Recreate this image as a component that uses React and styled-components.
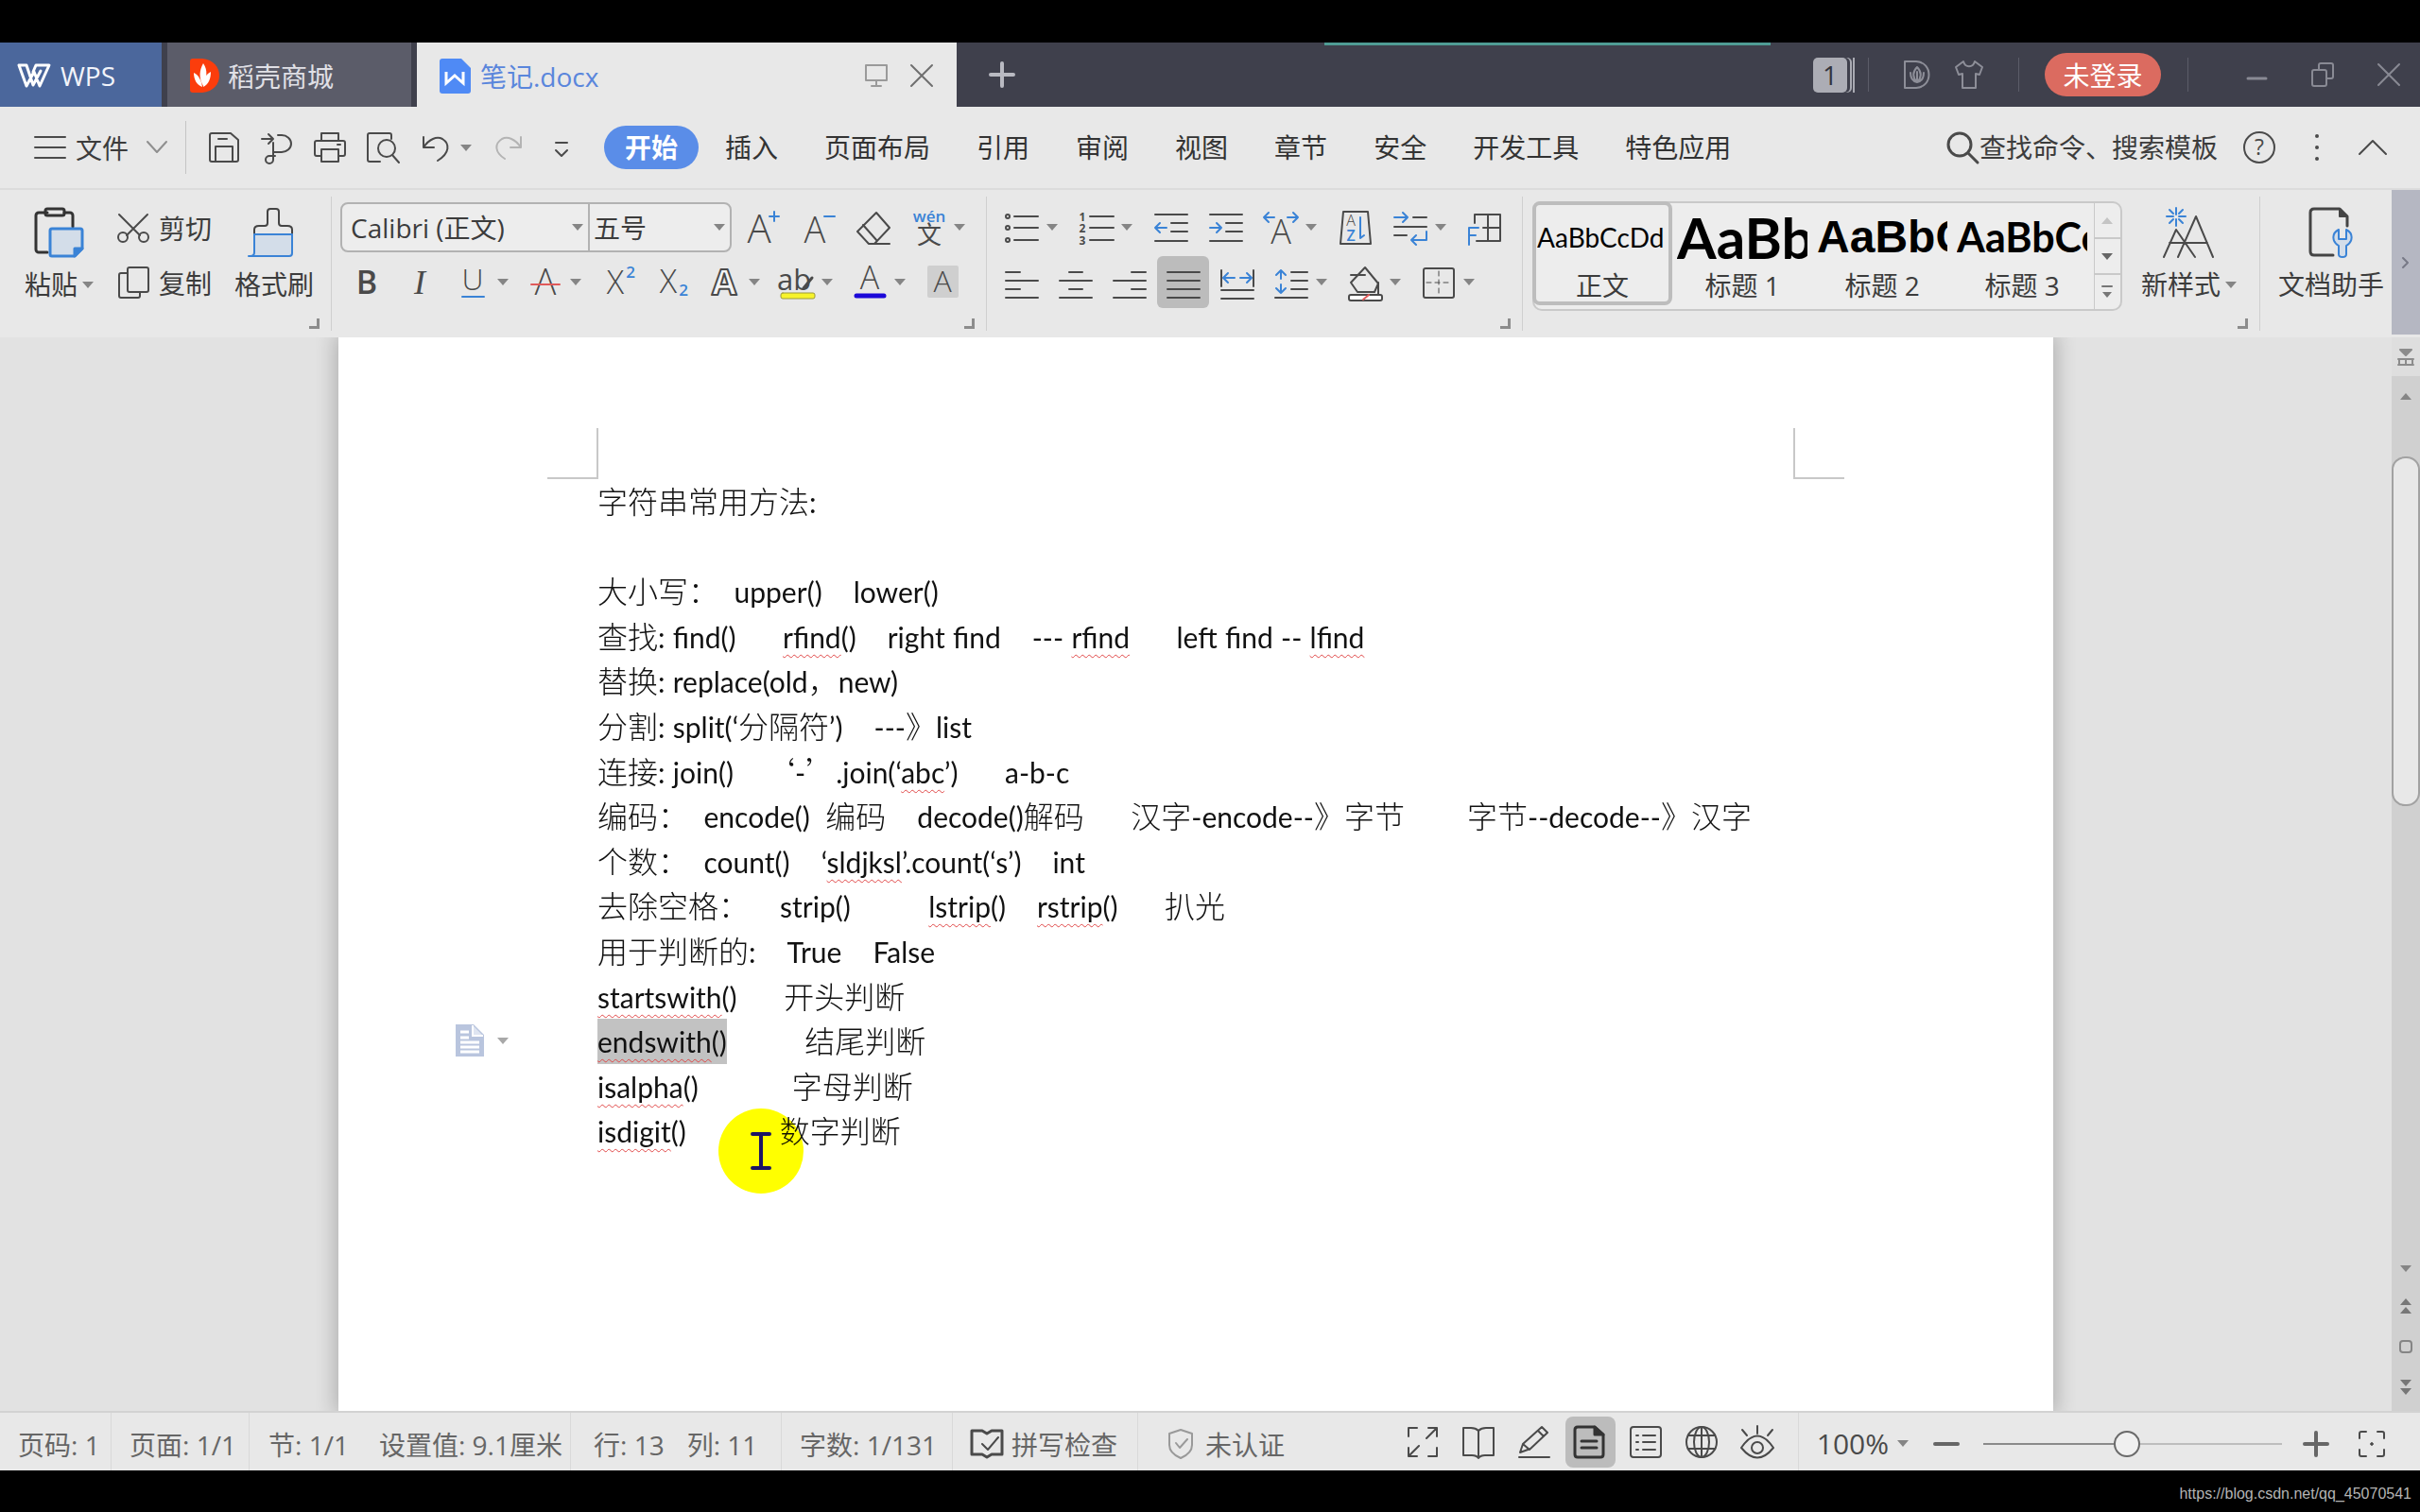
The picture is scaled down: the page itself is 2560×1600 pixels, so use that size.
import React from 'react';
import styled, { createGlobalStyle, css } from 'styled-components';

const UI_FONT = '"Open Sans", "Noto Sans CJK SC", sans-serif';
const DOC_FONT = 'Lato, "Noto Sans CJK SC", sans-serif';
const INK = '#4a4a4a';
const BLUE = '#3a83d6';

const GlobalStyle = createGlobalStyle`
    * { box-sizing: border-box; }
    body {
        margin: 0;
        background: #000;
        color: #3c3c3c;
        font-family: ${UI_FONT};
        font-size: 28px;
    }
    button, input, select {
        margin: 0;
        padding: 0;
        border: 0;
        background: none;
        color: inherit;
        font: inherit;
    }
    svg { display: block; flex: none; overflow: visible; }
`;

const Screen = styled.div`
    display: flex;
    flex-direction: column;
    min-height: 100vh;
    padding-top: 45px;
`;

// ---------- title bar ----------

const TitleBar = styled.header`
    display: flex;
    height: 68px;
    background: #3f404c;
    color: #e6e6ec;
`;

const WindowTab = styled.button`
    display: flex;
    align-items: center;
    gap: ${props => props.$gap || 9}px;
    width: ${props => props.$width}px;
    padding: 2px 24px 0;
    margin-right: ${props => props.$last ? 0 : 6}px;
    background: ${props => props.$bg};
    color: ${props => props.$color || '#e0e0e6'};
`;

const HomeTab = styled(WindowTab)`
    padding: 2px 18px 0;
`;

const TabTitle = styled.span`
    flex: 1;
    text-align: left;
    white-space: nowrap;
`;

const TabTools = styled.span`
    display: flex;
    gap: 22px;
`;

const NewTab = styled.button`
    width: 96px;
    display: flex;
    align-items: center;
    justify-content: center;
`;

const ProgressMark = styled.div`
    width: 472px;
    height: 3px;
    margin-left: 293px;
    background: #4f9c94;
`;

const TitleTools = styled.div`
    display: flex;
    align-items: center;
    margin-left: auto;
    padding-right: 20px;
`;

const CountBadge = styled.button`
    width: 44px;
    height: 37px;
    border-right: 2px solid #a9aab2;
    padding-right: 2px;
    span {
        display: block;
        height: 37px;
        border-radius: 5px;
        margin-right: 4px;
        background: #acadb5;
        color: #33343d;
        line-height: 37px;
        box-shadow: 3px 0 0 #3f404c, 5px 0 0 #a9aab2;
    }
`;

const TitleRule = styled.span`
    width: 1px;
    height: 36px;
    margin: 0 ${props => props.$right}px 0 ${props => props.$left}px;
    background: #5b5c68;
`;

const IconGap = styled.div`
    display: flex;
    align-items: center;
    gap: ${props => props.$gap}px;
`;

const BareButton = styled.button`
    display: flex;
    align-items: center;
    justify-content: center;
`;

const LoginButton = styled.button`
    width: 123px;
    height: 46px;
    border-radius: 23px;
    background: #db6b60;
    color: #fff;
`;

// ---------- menu ----------

const MenuBar = styled.nav`
    display: flex;
    align-items: center;
    height: 88px;
    padding: 0 34px 0 36px;
    background: #e8e8e8;
    border-bottom: 2px solid #dcdcdc;
`;

const FileMenu = styled.button`
    display: flex;
    align-items: center;
    gap: 10px;
    span { margin-right: 9px; }
`;

const MenuRule = styled.span`
    width: 1px;
    height: 56px;
    margin: 0 12px 0 19px;
    background: #c4c4c4;
`;

const QuickTools = styled.div`
    display: flex;
    gap: 1px;
    margin-right: 18px;
`;

const MenuTabs = styled.div`
    display: flex;
    gap: 1px;
`;

const MenuTab = styled.button`
    height: 46px;
    padding: 0 24px;
    border-radius: 23px;
    color: #333;
    line-height: 46px;
    white-space: nowrap;
    ${props => props.$active && css`
        padding: 0 22px;
        margin-right: 3px;
        background: #5a8de8;
        color: #fff;
        font-weight: 700;
    `}
`;

const SearchBox = styled.label`
    display: flex;
    align-items: center;
    margin-left: auto;
    input {
        width: 256px;
        height: 46px;
        outline: 0;
    }
    input::placeholder {
        color: #3c3c3c;
        opacity: 1;
    }
`;

const MenuTools = styled.div`
    display: flex;
    align-items: center;
    gap: 40px;
    margin-left: 22px;
`;

// ---------- ribbon ----------

const Ribbon = styled.section`
    display: flex;
    height: 156px;
    background: #e8e8e8;
`;

const Group = styled.div`
    display: flex;
    flex-direction: column;
    justify-content: space-between;
    flex: ${props => props.$grow ? '1' : 'none'};
    margin: 7px 0;
    padding: 5px 0 2px;
    border-right: ${props => props.$last ? '0' : '1px solid #cfcfcf'};
`;

const GroupBody = styled.div`
    display: flex;
    gap: ${props => props.$gap || 0}px;
    padding: 0 ${props => props.$right}px 0 ${props => props.$left || 9}px;
`;

const ToolRows = styled.div`
    display: flex;
    flex-direction: column;
    gap: 3px;
`;

const ToolRow = styled.div`
    display: flex;
    align-items: center;
    height: 55px;
    gap: ${props => props.$gap}px;
`;

const ToolButton = styled.button`
    display: flex;
    align-items: center;
    gap: 6px;
    width: ${props => props.$menu ? 76 : 55}px;
    height: 55px;
    padding-left: 8px;
    border-radius: 6px;
    background: ${props => props.$active ? '#bcbcbc' : 'none'};
`;

const BigButton = styled.button`
    display: flex;
    flex-direction: column;
    align-items: center;
    height: 116px;
    padding-top: 6px;
`;

const BigLabel = styled.span`
    display: flex;
    align-items: center;
    gap: 5px;
    line-height: 56px;
    white-space: nowrap;
`;

const SmallButton = styled.button`
    display: flex;
    align-items: center;
    gap: 9px;
    height: 55px;
`;

const Launcher = styled.button`
    align-self: flex-end;
    width: 11px;
    height: 11px;
    margin-right: 12px;
    border: solid #8c8c8c;
    border-width: 0 3px 3px 0;
`;

const FontBox = styled.div`
    display: flex;
    width: 414px;
    height: 53px;
    border: 2px solid #b2b2b2;
    border-radius: 8px;
    background: #ededed;
`;

const Picker = styled.label`
    display: flex;
    align-items: center;
    flex: ${props => props.$width ? 'none' : '1'};
    width: ${props => props.$width ? props.$width + 'px' : 'auto'};
    padding: 0 5px 0 ${props => props.$width ? 9 : 4}px;
    & + & { border-left: 2px solid #b2b2b2; }
    select {
        flex: 1;
        min-width: 0;
        appearance: none;
        outline: 0;
    }
`;

const Gallery = styled.div`
    display: flex;
    flex: 1;
    height: 116px;
    border: 2px solid #c9c9c9;
    border-radius: 10px;
    background: #ededed;
`;

const StyleCard = styled.button`
    display: flex;
    flex-direction: column;
    width: 148px;
    height: ${props => props.$active ? 110 : 112}px;
    padding: ${props => props.$active ? '0 1px' : '2px 5px'};
    border-radius: 8px;
    ${props => props.$active && css`
        margin: -2px 0 0 -2px;
        border: 4px solid #bdbdbd;
    `}
`;

const Preview = styled.span`
    width: 100%;
    height: 68px;
    overflow: hidden;
    color: #000;
    font-family: ${props => props.$face || DOC_FONT};
    font-size: ${props => props.$size}px;
    font-weight: ${props => props.$bold ? 700 : 400};
    line-height: 68px;
    text-align: left;
    white-space: nowrap;
`;

const StyleName = styled.span`
    width: 100%;
    line-height: 34px;
`;

const GalleryScroll = styled.div`
    display: flex;
    flex-direction: column;
    width: 28px;
    margin-left: auto;
    border-left: 1px solid #c9c9c9;
    button {
        display: flex;
        flex: 1;
        align-items: center;
        justify-content: center;
    }
    button + button { border-top: 2px solid #c9c9c9; }
`;

const RibbonMore = styled.button`
    display: flex;
    align-items: center;
    justify-content: center;
    flex: none;
    width: 30px;
    height: 153px;
    background: #b5b7c2;
`;

// ---------- document ----------

const Workspace = styled.main`
    display: flex;
    flex: 1;
    background: #e2e2e2;
`;

const Desk = styled.div`
    display: flex;
    flex: 1;
    justify-content: center;
`;

const Page = styled.article`
    width: 1814px;
    padding-top: 96px;
    background: #fff;
    box-shadow: 0 0 20px 4px rgba(0, 0, 0, 0.22);
    clip-path: inset(0 -24px);
`;

const Margins = styled.div`
    display: flex;
    justify-content: space-between;
    padding: 0 221px;
    span {
        width: 54px;
        height: 54px;
        border: solid #c8c8c8;
        border-width: 0 2px 2px 0;
    }
    span + span { border-width: 0 0 2px 2px; }
`;

const Lines = styled.div`
    display: grid;
    grid-auto-rows: minmax(0, 1fr);
    height: 714px;
    padding: 0 274px;
`;

const Line = styled.p`
    position: relative;
    margin: 0;
    color: #111;
    font-family: ${DOC_FONT};
    font-size: 32px;
    line-height: 48px;
    white-space: pre;
`;

const Latin = styled.span`
    font-size: 30px;
    line-height: 0;
`;

const Space = styled.span`
    font-family: "Liberation Serif", serif;
    font-size: 33px;
    line-height: 0;
`;

const Wide = styled.span`
    font-family: "Noto Sans CJK SC", sans-serif;
    font-weight: 300;
    line-height: 0;
`;

const Misspelt = styled(Latin)`
    text-decoration: underline wavy #e04848 1px;
    text-decoration-skip-ink: none;
    text-underline-offset: 6px;
`;

const Selected = styled.span`
    display: inline-block;
    height: 48px;
    background: #c2c2c2;
    vertical-align: top;
`;

const PasteOptions = styled.button`
    position: absolute;
    top: 6px;
    left: -150px;
    display: flex;
    align-items: center;
    gap: 14px;
`;

const Pointer = styled.span`
    position: absolute;
    top: 0;
    left: 128px;
    display: flex;
    align-items: center;
    justify-content: center;
    width: 90px;
    height: 90px;
    border-radius: 45px;
    background: #ffff00;
    mix-blend-mode: multiply;
`;

const ScrollBar = styled.div`
    display: flex;
    flex-direction: column;
    align-items: center;
    width: 30px;
    padding-bottom: 16px;
    background: #d0d0d0;
`;

const RulerButton = styled(BareButton)`
    width: 30px;
    height: 41px;
    margin-bottom: 18px;
    background: #dedede;
`;

const ScrollThumb = styled.div`
    width: 30px;
    height: 370px;
    margin: 60px 0 auto;
    border: 2px solid #a2a2a2;
    border-radius: 14px;
    background: #e8e8e8;
`;

const ScrollJumps = styled.div`
    display: flex;
    flex-direction: column;
    align-items: center;
    gap: 27px;
`;

// ---------- status bar ----------

const StatusBar = styled.footer`
    display: flex;
    align-items: center;
    height: 63px;
    border-top: 2px solid #d2d2d2;
    background: #e8e8e8;
    color: #666;
    white-space: nowrap;
`;

const StatusItem = styled.div`
    display: flex;
    align-items: center;
    gap: ${props => props.$gap || 0}px;
    height: 61px;
    padding: 4px 0 0 ${props => props.$left}px;
    width: ${props => props.$width}px;
    border-right: ${props => props.$open ? '0' : '1px solid #d9d9d9'};
`;

const ViewTools = styled.div`
    display: flex;
    align-items: center;
    gap: 6px;
    height: 61px;
    margin-left: auto;
    padding-right: 16px;
    border-right: 1px solid #d9d9d9;
`;

const ViewButton = styled(BareButton)`
    width: 53px;
    height: 54px;
    border-radius: 8px;
    background: ${props => props.$active ? '#bcbcbc' : 'none'};
`;

const ZoomTools = styled.div`
    display: flex;
    align-items: center;
    padding: 4px 36px 0 19px;
    color: ${INK};
`;

const ZoomValue = styled.button`
    display: flex;
    align-items: center;
    gap: 9px;
    margin-right: 26px;
    font-size: 30px;
`;

const ZoomSlider = styled.input`
    appearance: none;
    width: 316px;
    height: 28px;
    margin: 0 22px 0 25px;
    background: linear-gradient(to right, #8a8a8a 48%, #bdbdbd 48%) center / 100% 2px no-repeat;
    &::-webkit-slider-thumb {
        appearance: none;
        width: 28px;
        height: 28px;
        border: 2px solid #6a6a6a;
        border-radius: 14px;
        background: #f0f0f0;
    }
`;

const FitButton = styled(BareButton)`
    margin-left: 30px;
`;

const Footer = styled.div`
    height: 44px;
    padding: 0 9px;
    background: #000;
    color: #b4b4b4;
    font-family: "Liberation Sans", sans-serif;
    font-size: 16px;
    line-height: 50px;
    text-align: right;
`;

// ---------- icons ----------

const Icon = ({ w = 40, h = w, box = `0 0 ${w} ${h}`, color = INK, width = 2, children }) => (
    <svg width={w} height={h} viewBox={box} fill="none" stroke={color} strokeWidth={width}
        strokeLinecap="round" strokeLinejoin="round" aria-hidden="true">
        {children}
    </svg>
);

const Caret = ({ color = '#858585', up }) => (
    <svg width="12" height="7" viewBox="0 0 12 7" fill={color} aria-hidden="true">
        <path d={up ? 'M6 0l6 7H0z' : 'M0 0h12L6 7z'} />
    </svg>
);

const Letter = ({ x = 20, y = 36, size = 42, fill = INK, weight = 300, anchor = 'middle', children, ...rest }) => (
    <text x={x} y={y} fontSize={size} fontWeight={weight} fill={fill} stroke="none" textAnchor={anchor}
        fontFamily={UI_FONT} {...rest}>{children}</text>
);

const Tool = ({ label, menu, active, children }) => (
    <ToolButton $menu={menu} $active={active} aria-label={label}>
        <Icon>{children}</Icon>
        {menu && <Caret />}
    </ToolButton>
);

const LINES_Y = [9, 18, 27, 36];

const quickTools = [
    ['保存', <g key="a"><path d="M5 7a2 2 0 0 1 2-2h20l8 7v21a2 2 0 0 1-2 2H7a2 2 0 0 1-2-2z" /><path d="M11 35V19h18v16M14 11h9" /></g>],
    ['输出', <g key="a"><path d="M4 11h12M11 6l5 5-5 5M21 7h4a10 9 0 0 1 0 18h-8M16 15v18a4 4 0 1 1-4-4h6" /></g>],
    ['打印', <g key="a"><path d="M11 13V5h18v8M11 29H6a2 2 0 0 1-2-2V15a2 2 0 0 1 2-2h28a2 2 0 0 1 2 2v12a2 2 0 0 1-2 2h-5" /><path d="M11 22h18v13H11zM28 17h3" /></g>],
    ['打印预览', <g key="a"><path d="M17 35H6a2 2 0 0 1-2-2V7a2 2 0 0 1 2-2h21a2 2 0 0 1 2 2v4" /><circle cx="24" cy="21" r="9" /><path d="M30 28l7 8" /></g>],
    ['撤销', <g key="a"><path d="M7 9v11h11M7 20C13 11 21 8 27 11c8 5 8 15-5 23" /></g>, true],
    ['恢复', <g key="a" stroke="#b4b4b4"><path d="M33 9v11H22M33 20C27 11 19 8 13 11c-8 5-8 14 3 21" /></g>],
    ['自定义', <g key="a"><path d="M14 15h12M14 23l6 6 6-6" /></g>],
];

const fontTools = [
    ['加粗', <Letter key="a" size={34} y={32} weight={600}>B</Letter>],
    ['倾斜', <Letter key="a" size={36} y={32} fontFamily="Liberation Serif, serif" fontStyle="italic">I</Letter>],
    ['下划线', <g key="a"><Letter size={32} y={28}>U</Letter><path d="M9 35h23" stroke={BLUE} /></g>, true],
    ['删除线', <g key="a"><Letter size={38} y={33}>A</Letter><path d="M5 22h30" stroke="#e05a5a" /></g>, true],
    ['上标', <g key="a"><Letter x={17} y={32} size={34}>X</Letter><Letter x={33} y={15} size={17} fill={BLUE} weight={600}>2</Letter></g>],
    ['下标', <g key="a"><Letter x={17} y={31} size={34}>X</Letter><Letter x={33} y={34} size={17} fill={BLUE} weight={600}>2</Letter></g>],
    ['文字效果', <text key="a" x="20" y="33" fontSize="38" fontWeight="700" fontFamily={UI_FONT} textAnchor="middle" fill="#f4f4f4" stroke={INK} strokeWidth="2">A</text>, true],
    ['突出显示', <g key="a"><Letter x={17} y={28} size={31} weight={400}>ab</Letter><path d="M27 26l9-11" strokeWidth="3" /><rect x="3" y="31" width="36" height="6" rx="2" fill="#f7f32a" stroke="#9b9a3a" strokeWidth="1" /></g>, true],
    ['字体颜色', <g key="a"><Letter size={34} y={27}>A</Letter><path d="M6 34h29" stroke="#1b08d8" strokeWidth="5" /></g>, true],
    ['字符底纹', <g key="a"><rect x="4" y="2" width="33" height="34" rx="2" fill="#cfcfcf" stroke="none" /><Letter size={32} y={30}>A</Letter></g>],
];

const paragraphTop = [
    ['项目符号', <g key="a"><path d="M12 8h25M12 20h25M12 33h25" /><circle cx="5" cy="8" r="2" /><circle cx="5" cy="20" r="2" /><circle cx="5" cy="33" r="2" /></g>, true],
    ['编号', <g key="a"><path d="M13 8h25M13 20h25M13 33h25" /><Letter x={5} y={13} size={12} weight={700}>1</Letter><Letter x={5} y={25} size={12} weight={700}>2</Letter><Letter x={5} y={38} size={12} weight={700}>3</Letter></g>, true],
    ['减少缩进', <g key="a"><path d="M3 6h34M20 15h17M20 24h17M3 34h34" /><path d="M3 20h12M8 15l-5 5 5 5" stroke={BLUE} /></g>],
    ['增加缩进', <g key="a"><path d="M3 6h34M20 15h17M20 24h17M3 34h34" /><path d="M3 20h12M10 15l5 5-5 5" stroke={BLUE} /></g>],
    ['字符缩放', <g key="a"><Letter y={37} size={36}>A</Letter><path d="M2 9h11M7 4L2 9l5 5M27 9h11M33 4l5 5-5 5" stroke={BLUE} /></g>, true],
    ['排序', <g key="a"><path d="M7 3h26l3 34H4z" /><Letter x={15} y={18} size={16}>A</Letter><Letter x={15} y={34} size={16} fill={BLUE} weight={600}>Z</Letter><path d="M25 9v22l4-3" stroke={BLUE} /></g>],
    ['换行', <g key="a"><path d="M23 9h14M3 19h34M3 28h13" /><path d="M3 9h14M12 4l5 5-5 5M37 24v9H21M26 28l-5 5 5 5" stroke={BLUE} /></g>, true],
    ['制表位', <g key="a"><path d="M9 15V6h27v28H11M23 6v28M18 20h18" /><path d="M3 38V20h10M3 28h7" stroke={BLUE} /></g>],
];

const paragraphBottom = [
    ['左对齐', <path key="a" d="M3 9h15M3 18h34M3 27h15M3 36h34" />],
    ['居中', <path key="a" d="M13 9h14M3 18h34M13 27h14M3 36h34" />],
    ['右对齐', <path key="a" d="M22 9h15M3 18h34M22 27h15M3 36h34" />],
    ['两端对齐', <path key="a" d={LINES_Y.map(y => `M3 ${y}h34`).join('')} />, false, true],
    ['分散对齐', <g key="a"><path d="M3 7v17M37 7v17M3 28h34M3 37h34" /><path d="M6 15h11M10 10l-5 5 5 5M23 15h11M30 10l5 5-5 5" stroke={BLUE} /></g>],
    ['行距', <g key="a"><path d="M20 9h17M20 18h17M20 27h17M3 36h34" /><path d="M9 7v9M4 12l5-5 5 5M9 22v9M4 26l5 5 5-5" stroke={BLUE} /></g>, true],
    ['底纹', <g key="a"><path d="M20 4L5 20l7 10h18l4-9z" /><path d="M5 12h15M34 20v12" /><rect x="3" y="33" width="35" height="6" rx="2" fill="#fff" /><path d="M18 38l6-5" stroke="#e05a5a" /></g>, true],
    ['边框', <g key="a"><rect x="4" y="5" width="32" height="31" rx="2" /><path d="M20 8v26M7 20h27" strokeDasharray="5 4" strokeWidth="1" /></g>, true],
];

const renderTools = list => list.map(([label, art, menu, active]) => (
    <Tool key={label} label={label} menu={menu} active={active}>{art}</Tool>
));

const menuTabs = ['开始', '插入', '页面布局', '引用', '审阅', '视图', '章节', '安全', '开发工具', '特色应用'];

const styleCards = [
    { name: '正文', text: 'AaBbCcDd', size: 28 },
    { name: '标题 1', text: 'AaBbCc', size: 60, bold: true },
    { name: '标题 2', text: 'AaBbCc', size: 48, bold: true, face: '"Liberation Sans", sans-serif' },
    { name: '标题 3', text: 'AaBbCcD', size: 43, bold: true },
];

// A string is plain text; {bad} is flagged by the spell checker, {wide} keeps full-width quotes.
const docLines = [
    ['字符串常用方法:'],
    [],
    ['大小写：  upper()    lower()'],
    ['查找: find()      ', { bad: 'rfind' }, '()    right find    --- ', { bad: 'rfind' }, '      left find -- ', { bad: 'lfind' }],
    ['替换: replace(old，new)'],
    ['分割: split(‘分隔符’)    ---》list'],
    ['连接: join()    ', { wide: '‘' }, '-', { wide: '’' }, '.join(‘', { bad: 'abc' }, '’)      a-b-c'],
    ['编码：  encode()  编码    decode()解码      汉字-encode--》字节        字节--decode--》汉字'],
    ['个数：  count()    ‘', { bad: 'sldjksl' }, '’.count(‘s’)    int'],
    ['去除空格：    strip()          ', { bad: 'lstrip' }, '()    ', { bad: 'rstrip' }, '()      扒光'],
    ['用于判断的:    True    False'],
    [{ bad: 'startswith' }, '()      开头判断'],
    [{ bad: 'endswith', selected: true }, '          结尾判断'],
    [{ bad: 'isalpha' }, '()            字母判断'],
    [{ bad: 'isdigit' }, '()            数字判断'],
];

const TextRun = ({ text }) => text.split(/( +|[\u3000-\u9fff\uff00-\uffef]+)/).filter(Boolean).map((part, i) => {
    if (part[0] === ' ') return <Space key={i}>{part}</Space>;
    if (/[\u3000-\uffef]/.test(part)) return <Wide key={i}>{part}</Wide>;
    return <Latin key={i}>{part}</Latin>;
});

const DocRun = ({ run }) => {
    if (typeof run === 'string') return <TextRun text={run} />;
    if (run.wide) return <Wide>{run.wide}</Wide>;
    if (run.selected) return <Selected><Misspelt>{run.bad}</Misspelt><Latin>()</Latin></Selected>;
    return <Misspelt>{run.bad}</Misspelt>;
};

const SheetIcon = () => (
    <svg width="30" height="34" viewBox="0 0 30 34" aria-hidden="true">
        <path d="M0 0h19l11 11v23H0z" fill="#b9c5de" />
        <path d="M5 8h9M5 14h9M5 19h20M5 24h20M5 29h20" stroke="#fff" strokeWidth="3" />
        <path d="M18 1v11h11" fill="#dfe5f1" stroke="#fff" strokeWidth="2" />
    </svg>
);

const TitleSection = () => (
    <TitleBar>
        <HomeTab $width={171} $bg="#4b679c" $color="#f2f4fa" $gap={10}>
            <Icon w={36} h={26} color="#fff" width={3}>
                <path d="M2 2h8l7 21 8-15M2 2l8 22 8-15 6 15L34 2H20l-3 7" />
            </Icon>
            <TabTitle>WPS</TabTitle>
        </HomeTab>
        <WindowTab $width={258} $bg="#5b5c69">
            <svg width="31" height="36" viewBox="0 0 31 36" aria-hidden="true">
                <path d="M3 0h10c24 2 24 34 0 36H3a3 3 0 0 1-3-3V3a3 3 0 0 1 3-3z" fill="#fb3d0c" />
                <path d="M14 5c5 7 4 15 0 24-5-9-4-17 0-24zM4 15c5 2 8 8 9 15-6-2-9-8-9-15zM22 14c0 7-2 13-8 16 0-7 2-13 8-16z" fill="#fff" />
            </svg>
            <TabTitle>稻壳商城</TabTitle>
        </WindowTab>
        <WindowTab $width={571} $bg="#e8e8e8" $color="#5a86dc" $gap={10} $last>
            <svg width="33" height="37" viewBox="0 0 33 37" aria-hidden="true">
                <path d="M3 0h20l10 10v24a3 3 0 0 1-3 3H3a3 3 0 0 1-3-3V3a3 3 0 0 1 3-3z" fill="#4f8af5" />
                <path d="M7 14v12l9-8 9 8V14" fill="none" stroke="#fff" strokeWidth="3" />
            </svg>
            <TabTitle>笔记.docx</TabTitle>
            <TabTools>
                <Icon w={26} h={26} color="#9a9a9a"><path d="M2 2h22v16H2zM13 18v6M8 24h10" /></Icon>
                <Icon w={26} h={26} color="#6f6f6f"><path d="M2 2l22 22M24 2L2 24" /></Icon>
            </TabTools>
        </WindowTab>
        <NewTab aria-label="新建">
            <Icon w={30} color="#b9bac2" width={4}><path d="M15 3v24M3 15h24" /></Icon>
        </NewTab>
        <ProgressMark />
        <TitleTools>
            <CountBadge><span>1</span></CountBadge>
            <TitleRule $left={14} $right={36} />
            <IconGap $gap={24}>
                <Icon w={30} h={32} color="#8d8e98">
                    <path d="M2 2h12c18 1 18 27 0 28H2zM15 8c5 5 5 11 0 16-5-5-5-11 0-16zM8 14c0 6 2 9 7 10 5-1 7-4 7-10M15 13v11" />
                </Icon>
                <Icon w={32} h={32} color="#8d8e98">
                    <path d="M10 2c2 7 10 7 12 0l8 6-3 8-4-1v15H9V15l-4 1-3-8z" />
                </Icon>
            </IconGap>
            <TitleRule $left={36} $right={27} />
            <LoginButton>未登录</LoginButton>
            <TitleRule $left={28} $right={61} />
            <IconGap $gap={44}>
                <BareButton aria-label="最小化"><Icon w={24} h={26} color="#898a94" width={3}><path d="M2 17h19" /></Icon></BareButton>
                <BareButton aria-label="还原"><Icon w={26} h={28} color="#898a94"><path d="M9 8V4q0-2 2-2h11q2 0 2 2v12q0 2-2 2h-4M2 11q0-2 2-2h11q2 0 2 2v13q0 2-2 2H4q-2 0-2-2z" /></Icon></BareButton>
                <BareButton aria-label="关闭"><Icon w={26} h={26} color="#898a94"><path d="M2 2l22 22M24 2L2 24" /></Icon></BareButton>
            </IconGap>
        </TitleTools>
    </TitleBar>
);

const MenuSection = () => (
    <MenuBar>
        <FileMenu>
            <Icon w={34} h={26}><path d="M1 2h32M1 13h32M1 24h32" /></Icon>
            <span>文件</span>
            <Icon w={22} h={14} color="#8f8f8f"><path d="M1 1l10 11L21 1" /></Icon>
        </FileMenu>
        <MenuRule />
        <QuickTools>{renderTools(quickTools)}</QuickTools>
        <MenuTabs>
            {menuTabs.map((tab, i) => <MenuTab key={tab} $active={i === 0}>{tab}</MenuTab>)}
        </MenuTabs>
        <SearchBox>
            <Icon w={36} h={36} width={3}><circle cx="15" cy="15" r="12" /><path d="M24 24l10 10" /></Icon>
            <input type="text" aria-label="搜索" placeholder="查找命令、搜索模板" />
        </SearchBox>
        <MenuTools>
            <BareButton aria-label="帮助"><Icon w={36}><circle cx="18" cy="18" r="16" /><Letter x={18} y={26} size={23} weight={400}>?</Letter></Icon></BareButton>
            <BareButton aria-label="更多"><Icon w={6} h={30} width={4}><path d="M3 3v0M3 15v0M3 27v0" /></Icon></BareButton>
            <BareButton aria-label="收起"><Icon w={32} h={18}><path d="M2 16L16 2l14 14" /></Icon></BareButton>
        </MenuTools>
    </MenuBar>
);

const RibbonSection = () => (
    <Ribbon>
        <Group>
            <GroupBody $left={26} $right={18} $gap={24}>
                <BigButton>
                    <Icon w={54} h={54} color="#333" width={3}>
                        <path d="M14 6H5a3 3 0 0 0-3 3v36a3 3 0 0 0 3 3h9M32 6h6a3 3 0 0 1 3 3v12" />
                        <rect x="12" y="2" width="20" height="7" rx="2" />
                        <path d="M19 23h30q2 0 2 2v19l-8 8H19q-2 0-2-2V25q0-2 2-2z" fill="#d3dde9" stroke={BLUE} />
                        <path d="M51 44h-8v8z" fill={BLUE} stroke={BLUE} />
                    </Icon>
                    <BigLabel>粘贴<Caret /></BigLabel>
                </BigButton>
                <ToolRows>
                    <SmallButton>
                        <Icon w={36} h={36}><path d="M3 4l22 22M33 4L11 26" /><circle cx="7" cy="28" r="5" /><circle cx="29" cy="28" r="5" /></Icon>
                        剪切
                    </SmallButton>
                    <SmallButton>
                        <Icon w={36} h={36}><rect x="12" y="2" width="22" height="26" rx="2" /><path d="M12 8H5q-2 0-2 2v22q0 2 2 2h18q2 0 2-2v-4" /></Icon>
                        复制
                    </SmallButton>
                </ToolRows>
                <BigButton>
                    <Icon w={54} h={54} color="#444">
                        <path d="M6 28v-4q0-4 5-4h6q3 0 3-3V5q0-3 3-3h6q3 0 3 3v12q0 3 3 3h6q5 0 5 4v4" />
                        <path d="M6 29h40v20q0 3-3 3H0h2q4 0 4-4z" fill="#d3dde9" stroke={BLUE} />
                    </Icon>
                    <BigLabel>格式刷</BigLabel>
                </BigButton>
            </GroupBody>
            <Launcher aria-label="剪贴板" />
        </Group>
        <Group>
            <GroupBody $right={12}>
                <ToolRows>
                    <ToolRow $gap={4}>
                        <FontBox>
                            <Picker $width={260}>
                                <select aria-label="字体" defaultValue="a"><option value="a">Calibri (正文)</option></select>
                                <Caret />
                            </Picker>
                            <Picker>
                                <select aria-label="字号" defaultValue="a"><option value="a">五号</option></select>
                                <Caret />
                            </Picker>
                        </FontBox>
                        <Tool label="增大字号"><Letter x={17} y={36} size={42}>A</Letter><path d="M28 8h10M33 3v10" stroke={BLUE} /></Tool>
                        <Tool label="减小字号"><Letter x={17} y={36} size={38}>A</Letter><path d="M27 8h11" stroke={BLUE} /></Tool>
                        <Tool label="清除格式"><path d="M23 4l14 16-16 17h-6L3 24zM9 17l15 17M15 37h22" /></Tool>
                        <Tool label="拼音指南" menu><Letter y={14} size={17} fill={BLUE} weight={600}>wén</Letter><Letter y={37} size={26} weight={400}>文</Letter></Tool>
                    </ToolRow>
                    <ToolRow $gap={1}>{renderTools(fontTools)}</ToolRow>
                </ToolRows>
            </GroupBody>
            <Launcher aria-label="字体设置" />
        </Group>
        <Group>
            <GroupBody $right={12}>
                <ToolRows>
                    <ToolRow $gap={3}>{renderTools(paragraphTop)}</ToolRow>
                    <ToolRow $gap={2}>{renderTools(paragraphBottom)}</ToolRow>
                </ToolRows>
            </GroupBody>
            <Launcher aria-label="段落设置" />
        </Group>
        <Group $grow>
            <GroupBody $left={10} $right={24} $gap={20}>
                <Gallery>
                    {styleCards.map((card, i) => (
                        <StyleCard key={card.name} $active={i === 0}>
                            <Preview $size={card.size} $bold={card.bold} $face={card.face}>{card.text}</Preview>
                            <StyleName>{card.name}</StyleName>
                        </StyleCard>
                    ))}
                    <GalleryScroll>
                        <button aria-label="上一行"><Caret up color="#c4c4c4" /></button>
                        <button aria-label="下一行"><Caret color="#666" /></button>
                        <button aria-label="更多样式"><Icon w={14} h={16} color="#777"><path d="M2 2h10" /><path d="M2 8h10l-5 6z" fill="#777" stroke="none" /></Icon></button>
                    </GalleryScroll>
                </Gallery>
                <BigButton>
                    <Icon w={56} h={54}>
                        <path d="M2 53L15 24l20 29M17 53L36 10l18 43M8 38h40" strokeWidth="2" />
                        <path d="M15 1v7M15 13v7M5 10h7M18 10h7M8 3l4 4M18 13l4 4M22 3l-4 4M8 17l4-4" stroke={BLUE} />
                    </Icon>
                    <BigLabel>新样式<Caret /></BigLabel>
                </BigButton>
            </GroupBody>
            <Launcher aria-label="样式设置" />
        </Group>
        <Group $last>
            <GroupBody $left={19} $right={8}>
                <BigButton>
                    <Icon w={48} h={54} color="#444">
                        <path d="M26 51H6q-4 0-4-4V6q0-4 4-4h27l8 8v10" strokeWidth="3" />
                        <path d="M33 2v8h8z" fill="#444" />
                        <path d="M32 24c-8 4-7 13 0 17v9q0 3 4 3t4-3v-9c7-4 8-13 0-17v10h-8z" fill="#d3dde9" stroke={BLUE} />
                    </Icon>
                    <BigLabel>文档助手</BigLabel>
                </BigButton>
            </GroupBody>
        </Group>
        <RibbonMore aria-label="展开">
            <Icon w={10} h={14} color="#777986"><path d="M2 2l5 5-5 5" /></Icon>
        </RibbonMore>
    </Ribbon>
);

const DocumentSection = () => (
    <Workspace>
        <Desk>
            <Page>
                <Margins><span /><span /></Margins>
                <Lines>
                    {docLines.map((line, i) => (
                        <Line key={i}>
                            {line.map((run, j) => <DocRun key={j} run={run} />)}
                            {line[0] && line[0].selected && <PasteOptions aria-label="粘贴选项"><SheetIcon /><Caret color="#a8a8a8" /></PasteOptions>}
                            {i === docLines.length - 1 && (
                                <Pointer>
                                    <Icon w={24} h={42} color="#1c1464" width={4}><path d="M3 3h18M12 3v36M3 39h18" /></Icon>
                                </Pointer>
                            )}
                        </Line>
                    ))}
                </Lines>
            </Page>
        </Desk>
        <ScrollBar>
            <RulerButton aria-label="标尺">
                <Icon w={18} h={20} color="#8c8c8c"><path d="M3 2h12l-6 6z" fill="#8c8c8c" /><path d="M1 12h16M1 18h16M2 12v6M9 12v6M16 12v6" /></Icon>
            </RulerButton>
            <BareButton aria-label="向上"><Caret up /></BareButton>
            <ScrollThumb />
            <ScrollJumps>
                <BareButton aria-label="向下"><Caret /></BareButton>
                <BareButton aria-label="上一页"><Icon w={14} h={18}><path d="M1 8l6-7 6 7zM1 17l6-7 6 7z" fill="#777" stroke="none" /></Icon></BareButton>
                <BareButton aria-label="选择浏览对象"><Icon w={14} h={14} color="#858585"><rect x="1" y="1" width="12" height="12" rx="3" /></Icon></BareButton>
                <BareButton aria-label="下一页"><Icon w={14} h={18}><path d="M1 1l6 7 6-7zM1 10l6 7 6-7z" fill="#777" stroke="none" /></Icon></BareButton>
            </ScrollJumps>
        </ScrollBar>
    </Workspace>
);

const StatusSection = () => (
    <StatusBar>
        <StatusItem $width={118} $left={19}>页码: 1</StatusItem>
        <StatusItem $width={146} $left={19}>页面: 1/1</StatusItem>
        <StatusItem $width={340} $left={20} $gap={32}><span>节: 1/1</span><span>设置值: 9.1厘米</span></StatusItem>
        <StatusItem $width={223} $left={24} $gap={24}><span>行: 13</span><span>列: 11</span></StatusItem>
        <StatusItem $width={181} $left={19}>字数: 1/131</StatusItem>
        <StatusItem $width={196} $left={18} $gap={8}>
            <Icon w={36} h={32} width={3}><path d="M2 2h11l5 3 5-3h11v25H23l-5 3-5-3H2z" /><path d="M13 16l6 6L30 9" strokeWidth="2" /></Icon>
            拼写检查
        </StatusItem>
        <StatusItem $width={160} $left={31} $gap={12} $open>
            <Icon w={28} h={34} color="#999"><path d="M14 2l12 4v12c0 7-5 11-12 14C7 29 2 25 2 18V6z" /><path d="M9 16l4 5 8-9" /></Icon>
            未认证
        </StatusItem>
        <ViewTools>
            <ViewButton aria-label="全屏"><Icon w={36}><path d="M3 12V3h9M24 3h9v9M33 3L22 14M33 24v9h-9M12 33H3v-9M3 33l11-11" /></Icon></ViewButton>
            <ViewButton aria-label="阅读"><Icon w={36}><path d="M18 6q-3-3-8-3H2v29h9q5 0 7 3 2-3 7-3h9V3h-8q-5 0-8 3zM18 6v29" /></Icon></ViewButton>
            <ViewButton aria-label="写作"><Icon w={36}><path d="M3 29l3-9L26 2l6 6-18 17zM22 6l6 6M6 20l7 6M2 34h32" /></Icon></ViewButton>
            <ViewButton aria-label="页面" $active><Icon w={36} color="#333" width={3}><path d="M5 2h18l9 8v21q0 3-3 3H5q-3 0-3-3V5q0-3 3-3zM9 17h16M9 24h16" /><path d="M23 2v8h9z" fill="#333" /></Icon></ViewButton>
            <ViewButton aria-label="大纲"><Icon w={36}><rect x="2" y="2" width="32" height="32" rx="3" /><path d="M8 11h2M15 11h13M8 18h2M15 18h13M15 26h13M8 26h2" /></Icon></ViewButton>
            <ViewButton aria-label="Web"><Icon w={36}><circle cx="18" cy="18" r="16" /><ellipse cx="18" cy="18" rx="8" ry="16" /><path d="M18 2v32M4 11h28M4 25h28" /></Icon></ViewButton>
            <ViewButton aria-label="护眼"><Icon w={40} h={38}><path d="M3 25q17-25 34 0-17 21-34 0z" /><circle cx="20" cy="25" r="6" /><path d="M20 2v8M4 6l5 6M36 6l-5 6" /></Icon></ViewButton>
        </ViewTools>
        <ZoomTools>
            <ZoomValue>100%<Caret /></ZoomValue>
            <BareButton aria-label="缩小"><Icon w={28} color="#666" width={4}><path d="M2 14h24" /></Icon></BareButton>
            <ZoomSlider type="range" aria-label="显示比例" min="0" max="100" defaultValue="48" />
            <BareButton aria-label="放大"><Icon w={28} color="#666" width={4}><path d="M2 14h24M14 2v24" /></Icon></BareButton>
            <FitButton aria-label="最佳显示比例"><Icon w={30}><path d="M2 9V4q0-2 2-2h5M21 2h5q2 0 2 2v5M28 21v5q0 2-2 2h-5M9 28H4q-2 0-2-2v-5M15 14v2M14 15h2" /></Icon></FitButton>
        </ZoomTools>
    </StatusBar>
);

const App = () => (
    <Screen>
        <GlobalStyle />
        <TitleSection />
        <MenuSection />
        <RibbonSection />
        <DocumentSection />
        <StatusSection />
        <Footer>https://blog.csdn.net/qq_45070541</Footer>
    </Screen>
);

export default App;
